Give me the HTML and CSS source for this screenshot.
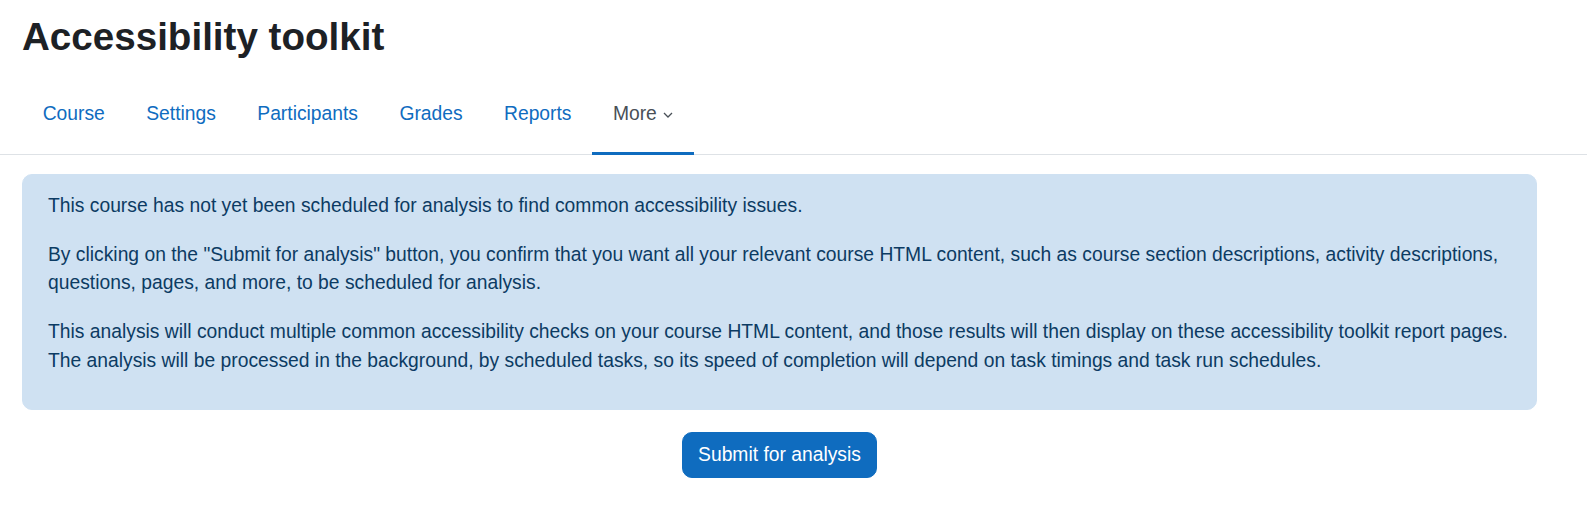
FILE: index.html
```html
<!DOCTYPE html>
<html lang="en">
<head>
    <meta charset="UTF-8">
    <meta name="viewport" content="width=device-width, initial-scale=1.0">
    <title>Accessibility toolkit</title>
    <link rel="stylesheet" href="styles.css">
</head>
<body>
    <div class="page-header">
        <h1>Accessibility toolkit</h1>
    </div>
    <nav class="secondary-nav">
        <ul class="nav-list">
            <li><a class="nav-link" href="#">Course</a></li>
            <li><a class="nav-link" href="#">Settings</a></li>
            <li><a class="nav-link" href="#">Participants</a></li>
            <li><a class="nav-link" href="#">Grades</a></li>
            <li><a class="nav-link" href="#">Reports</a></li>
            <li>
                <a class="nav-link active" href="#">More
                    <svg class="chevron" width="10" height="6" viewBox="0 0 10 6"><path d="M1 1l4 4 4-4" fill="none" stroke="currentColor" stroke-width="1.3"/></svg>
                </a>
            </li>
        </ul>
    </nav>
    <div class="content">
        <div class="alert">
            <p>This course has not yet been scheduled for analysis to find common accessibility issues.</p>
            <p>By clicking on the "Submit for analysis" button, you confirm that you want all your relevant course HTML content, such as course section descriptions, activity descriptions, questions, pages, and more, to be scheduled for analysis.</p>
            <p>This analysis will conduct multiple common accessibility checks on your course HTML content, and those results will then display on these accessibility toolkit report pages. The analysis will be processed in the background, by scheduled tasks, so its speed of completion will depend on task timings and task run schedules.</p>
        </div>
        <div class="actions">
            <button class="btn">Submit for analysis</button>
        </div>
    </div>
</body>
</html>
```

FILE: styles.css
```css
body {
    font-family: "Liberation Sans", Arial, sans-serif;
    font-size: 19.3px;
    line-height: 28.5px;
    color: #1d2125;
    background: #fff;
    margin: 0;
}
.page-header {
    padding: 13.5px 50px 0 22px;
}
.page-header h1 {
    font-size: 38.6px;
    font-weight: bold;
    line-height: 1.2;
    margin: 0;
    color: #1d2125;
}
.secondary-nav {
    margin-top: 16.5px;
    padding: 0 22px;
    border-bottom: 1px solid #dee2e6;
}
.nav-list {
    list-style: none;
    display: flex;
    margin: 0 0 -1px;
    padding: 0;
}
.nav-link {
    display: flex;
    align-items: center;
    gap: 6px;
    height: 78.2px;
    box-sizing: border-box;
    padding: 0 20.7px;
    border-bottom: 3px solid transparent;
    color: #0f6cbf;
    text-decoration: none;
}
.nav-link.active {
    color: #495057;
    border-bottom-color: #0f6cbf;
}
.chevron {
    margin-top: 2px;
}
.content {
    padding: 19.5px 50px 0 22px;
}
.alert {
    background: #cfe1f2;
    color: #0c3b63;
    border: 1px solid #cfe1f2;
    border-radius: 10px;
    padding: 16.5px 25px 13.5px;
    margin-bottom: 22px;
}
.alert p {
    margin: 0 0 20.5px;
}
.actions {
    text-align: center;
}
.btn {
    font-family: inherit;
    font-size: 19.3px;
    line-height: 28.5px;
    color: #fff;
    background: #0f6cbf;
    border: 1px solid #0f6cbf;
    border-radius: 10px;
    padding: 7.5px 15px;
    cursor: pointer;
}
```
